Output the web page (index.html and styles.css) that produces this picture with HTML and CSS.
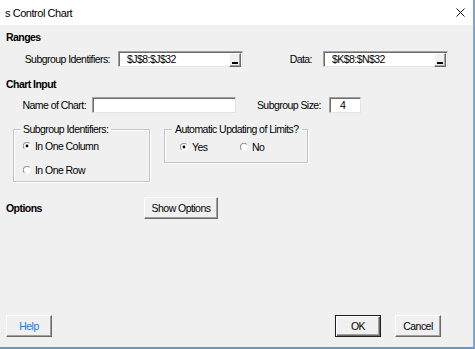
FILE: index.html
```html
<!DOCTYPE html>
<html lang="en">
<head>
<meta charset="utf-8">
<title>s Control Chart</title>
<link rel="stylesheet" href="styles.css">
</head>
<body>
<div class="window">
  <div class="titlebar">
    <span class="title">s Control Chart</span>
    <svg class="close" width="9" height="9" viewBox="0 0 9 9"><path d="M0.5 0.5L8.5 8.5M8.5 0.5L0.5 8.5" stroke="#111" stroke-width="1" fill="none"/></svg>
  </div>
  <div class="content">
    <div class="heading">Ranges</div>
    <div class="ranges-row">
      <span class="lbl">Subgroup Identifiers:</span>
      <div class="field refedit"><span>$J$8:$J$32</span><span class="collapse"><span class="bar"></span></span></div>
      <span class="lbl lbl-data">Data:</span>
      <div class="field refedit"><span>$K$8:$N$32</span><span class="collapse"><span class="bar"></span></span></div>
    </div>
    <div class="heading heading-chart">Chart Input</div>
    <div class="name-row">
      <span class="lbl lbl-name">Name of Chart:</span>
      <div class="field"></div>
      <span class="lbl lbl-size">Subgroup Size:</span>
      <div class="field field-size">4</div>
    </div>
    <div class="groups">
      <fieldset class="group group-ids">
        <legend>Subgroup Identifiers:</legend>
        <div class="radio-row first">
          <svg class="radio" width="8" height="8" viewBox="0 0 8 8"><circle cx="4" cy="4" r="3.6" fill="#fff"/><path d="M1.3 6.7A3.7 3.7 0 0 1 6.7 1.3" stroke="#7d7d7d" stroke-width="1" fill="none"/><circle cx="4" cy="4" r="1.4" fill="#000"/></svg>
          <span>In One Column</span>
        </div>
        <div class="radio-row second">
          <svg class="radio" width="8" height="8" viewBox="0 0 8 8"><circle cx="4" cy="4" r="3.6" fill="#fff"/><path d="M1.3 6.7A3.7 3.7 0 0 1 6.7 1.3" stroke="#7d7d7d" stroke-width="1" fill="none"/></svg>
          <span>In One Row</span>
        </div>
      </fieldset>
      <fieldset class="group group-auto">
        <legend>Automatic Updating of Limits?</legend>
        <div class="radio-line">
          <div class="radio-row yes">
            <svg class="radio" width="8" height="8" viewBox="0 0 8 8"><circle cx="4" cy="4" r="3.6" fill="#fff"/><path d="M1.3 6.7A3.7 3.7 0 0 1 6.7 1.3" stroke="#7d7d7d" stroke-width="1" fill="none"/><circle cx="4" cy="4" r="1.4" fill="#000"/></svg>
            <span>Yes</span>
          </div>
          <div class="radio-row">
            <svg class="radio" width="8" height="8" viewBox="0 0 8 8"><circle cx="4" cy="4" r="3.6" fill="#fff"/><path d="M1.3 6.7A3.7 3.7 0 0 1 6.7 1.3" stroke="#7d7d7d" stroke-width="1" fill="none"/></svg>
            <span>No</span>
          </div>
        </div>
      </fieldset>
    </div>
    <div class="options-row">
      <span class="heading options-label">Options</span>
      <button class="btn btn-options">Show Options</button>
    </div>
    <div class="footer">
      <button class="btn btn-help">Help</button>
      <div class="footer-right">
        <button class="btn btn-ok">OK</button>
        <button class="btn">Cancel</button>
      </div>
    </div>
  </div>
</div>
</body>
</html>
```

FILE: styles.css
```css
* { box-sizing: border-box; }
html, body { margin: 0; padding: 0; background: #f0f0f0; }
body {
  font-family: "Liberation Sans", Arial, sans-serif;
  font-size: 10.5px;
  letter-spacing: -0.55px;
  color: #000;
}
.window {
  width: 475px;
  height: 349px;
  border-right: 2px solid #84a3c9;
  border-bottom: 2px solid #6f95c3;
  background: #f0f0f0;
  display: flex;
  flex-direction: column;
}
.titlebar {
  height: 25px;
  flex: none;
  background: #fff;
  display: flex;
  align-items: center;
  justify-content: space-between;
  padding: 0 8px 0 5px;
}
.title { font-size: 11px; letter-spacing: -0.45px; }
.close { display: block; }
.content {
  flex: 1;
  display: flex;
  flex-direction: column;
  padding: 6px 6px 10px 6px;
}
.heading { font-weight: bold; line-height: 13px; height: 13px; }
.heading-chart { margin-top: 11px; }
.lbl { text-align: right; padding-right: 8px; line-height: 13px; white-space: nowrap; }
.ranges-row {
  margin-top: 7px;
  display: grid;
  grid-template-columns: 112px 125px 80px 125px;
  align-items: center;
}
.lbl-data { padding-right: 11px; }
.name-row {
  margin-top: 6px;
  display: grid;
  grid-template-columns: 86px 144px 93px 32px;
  align-items: center;
}
.lbl-name { padding-right: 6px; }
.lbl-size { padding-right: 8px; }
.field {
  height: 16px;
  background: #fff;
  border: 1px solid;
  border-color: #a0a0a0 #e3e3e3 #e3e3e3 #a0a0a0;
  box-shadow: inset 1px 1px 0 #6d6d6d;
  padding: 1px 1px 1px 8px;
  line-height: 12px;
  display: flex;
  align-items: center;
}
.field-size { padding-left: 10px; }
.refedit { justify-content: space-between; }
.collapse {
  width: 12px;
  height: 14px;
  margin-top: 1px;
  background: #f0f0f0;
  border: 1px solid;
  border-color: #fff #696969 #696969 #fff;
  box-shadow: inset -1px -1px 0 #a0a0a0;
  display: flex;
  align-items: flex-end;
  justify-content: center;
  padding-bottom: 2px;
}
.bar { width: 6px; height: 2px; background: #000; }
.groups {
  margin-top: 10px;
  display: flex;
  align-items: flex-start;
  gap: 14px;
  padding-left: 7px;
}
.group {
  margin: 0;
  border: 1px solid #c4c4c4;
  box-shadow: inset 1px 1px 0 #fff, 1px 1px 0 #fff;
  min-width: 0;
}
.group legend { padding: 0 3px; line-height: 13px; }
.group-ids { width: 137px; padding: 0 0 5px 6px; }
.group-auto { width: 144px; padding: 0 0 9px 7px; }
.radio-row { display: flex; align-items: center; height: 13px; gap: 4px; }
.radio { display: block; flex: none; }
.group-ids .radio-row { margin-left: 3px; }
.radio-row.first { margin-top: 3px; }
.radio-row.second { margin-top: 11px; }
.radio-line { display: flex; margin-top: 4px; margin-left: 8px; }
.radio-line .yes { width: 60px; }
.options-row {
  margin-top: 15px;
  display: flex;
  align-items: center;
  height: 22px;
}
.options-label { width: 138px; }
.btn {
  font-family: inherit;
  font-size: 10.5px;
  letter-spacing: -0.55px;
  color: #000;
  width: 46px;
  height: 22px;
  padding: 0;
  background: #f0f0f0;
  border: 1px solid;
  border-color: #fff #696969 #696969 #fff;
  box-shadow: inset -1px -1px 0 #a0a0a0;
}
.btn-options { width: 74px; }
.btn-help { color: #2a78d6; }
.btn-ok {
  border: 1px solid #1e1e1e;
  box-shadow: inset 1px 1px 0 #fff, inset -1px -1px 0 #696969, inset -2px -2px 0 #a0a0a0;
}
.footer {
  margin-top: auto;
  display: flex;
  justify-content: space-between;
}
.footer-right { display: flex; gap: 14px; margin-right: 26px; }
```
